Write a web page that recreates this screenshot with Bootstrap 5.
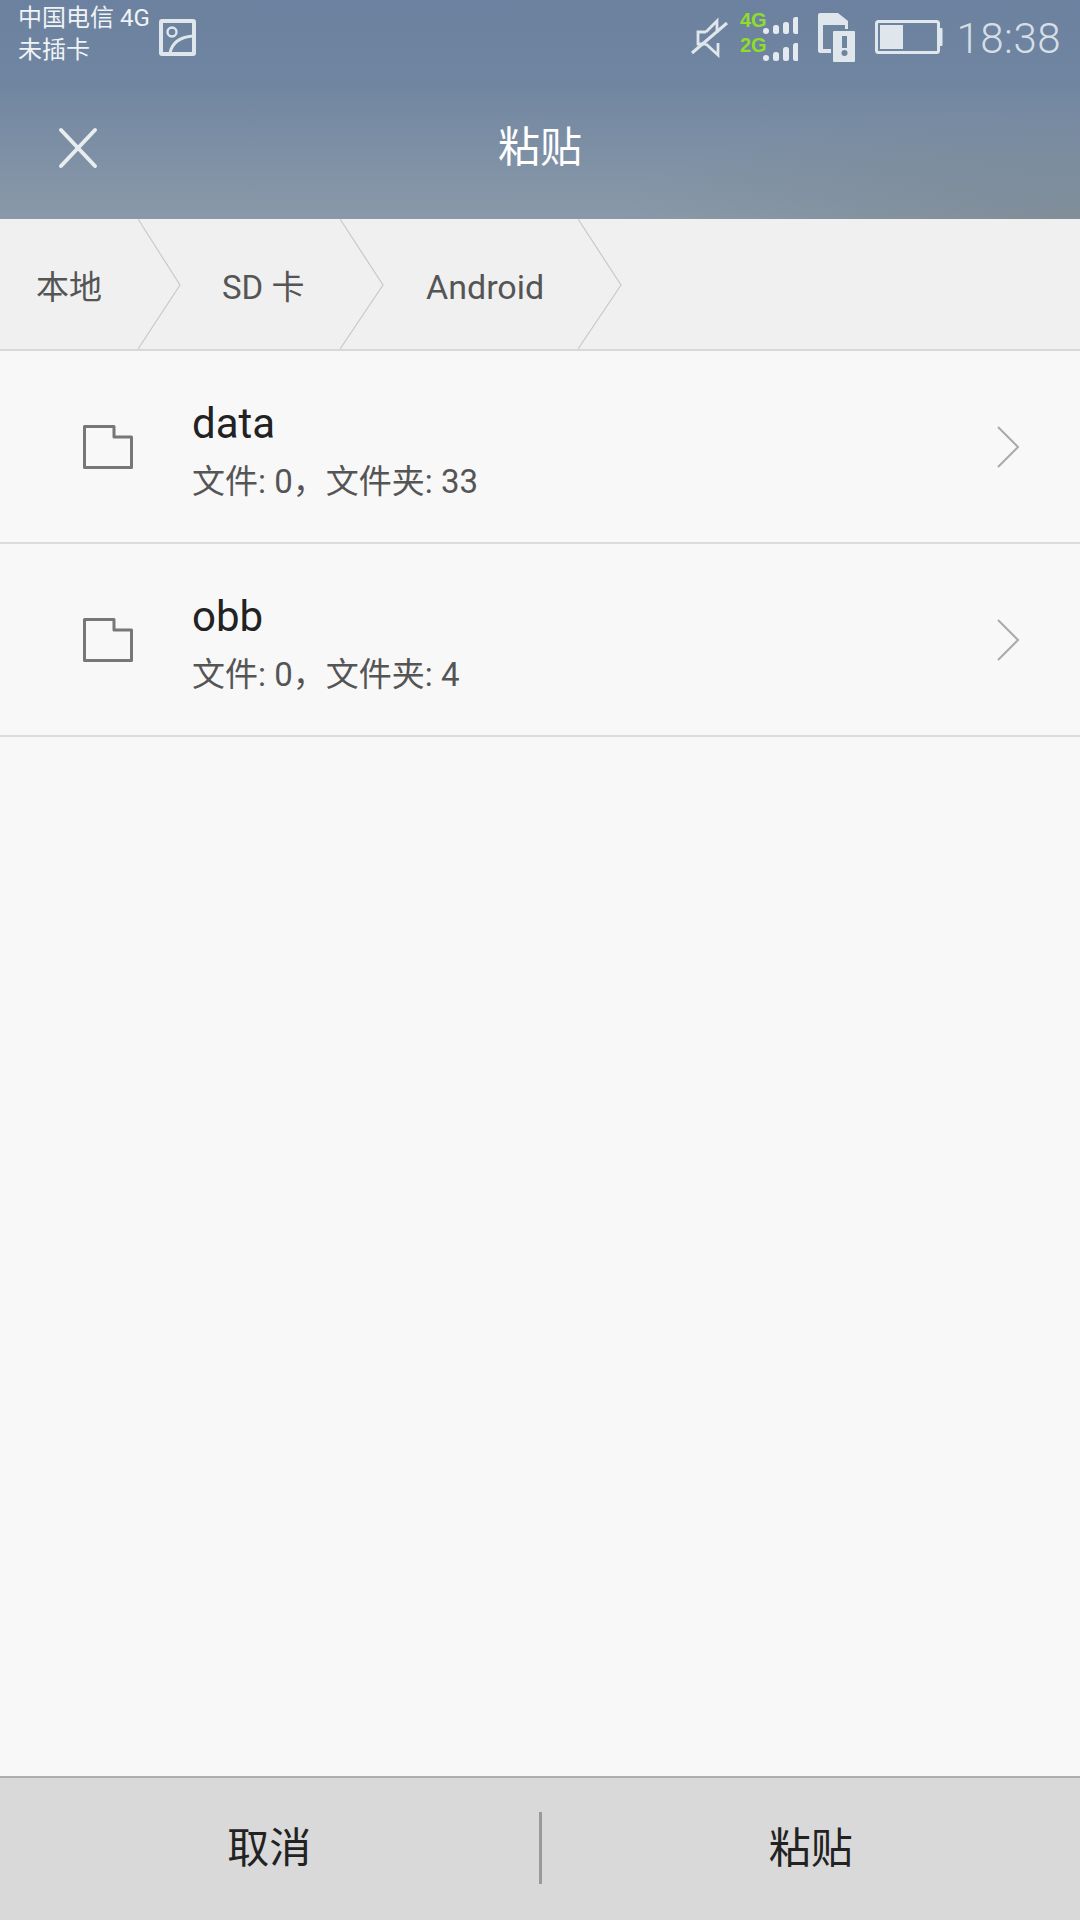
<!DOCTYPE html>
<html lang="zh"><head><meta charset="utf-8"><title>粘贴</title>
<link href="https://cdn.jsdelivr.net/npm/bootstrap@5.3.0/dist/css/bootstrap.min.css" rel="stylesheet">
<style>
html,body{height:1920px;margin:0;background:#f8f8f8;font-family:Roboto,"Noto Sans CJK SC",sans-serif;overflow:hidden}
.shell{height:1920px}
.topzone{height:219px;background:radial-gradient(ellipse 460px 110px at 100% 100%,rgba(105,115,115,.3),rgba(105,115,115,0)),linear-gradient(180deg,#6b819f 0%,#6f85a0 35%,#8a99a9 100%)}
.statusrow{height:74px;padding:0 19px 0 18px}
.carrier{font-size:24px;line-height:32px;color:#f0f3f6;padding-bottom:6px;width:141px;white-space:nowrap}
.muteicon{margin-right:12px}
.sigicon{margin-right:18px}
.simicon{margin-right:18px}
.batticon{margin-right:13px}
.clock{font-size:42px;font-weight:300;color:#d6dee6;line-height:1;letter-spacing:.5px;padding-top:3px}
.titlerow{height:145px}
.titletext{font-size:42px;color:#fff;line-height:1;padding-top:3px}
.closebtn{left:58px;top:50%;margin-top:-20px}
.crumbs{height:132px;background:#f0f0f0;border-bottom:2px solid #d8d8d8}
.crumbitem{height:130px;font-size:33px;color:#555;padding-top:7px}
.crumbone{width:138px;padding-left:36px}
.crumbtwo{width:202px;padding-left:84px}
.crumbthree{width:238px;padding-left:86px;font-size:34px}
.crumbmark{left:100%;top:0}
.filerow{height:193px;border-bottom:2px solid #dcdcdc}
.foldericon{margin-left:83px;margin-right:59px}
.filetext{padding-top:8px}
.filename{font-size:42px;color:#222;line-height:48px}
.fileinfo{font-size:33px;color:#555;line-height:40px;margin-top:14px}
.rowchev{margin-right:60px}
.actionbar{height:144px;background:#d9d9d9;border-top:2px solid #aeaeae}
.actionbtn{font-size:42px;color:#222;line-height:1}
.actionline{width:3px;height:72px;background:#999;margin-bottom:2px}
</style></head><body>
<div class="shell d-flex flex-column">
<div class="topzone flex-shrink-0">
  <div class="statusrow d-flex align-items-center">
    <div class="carrier">中国电信 4G<br>未插卡</div>
    <svg width="37" height="37" viewBox="0 0 37 37" fill="none" stroke="#dfe6ec"><rect x="2" y="2" width="33" height="33" rx="1" stroke-width="4"/><circle cx="13" cy="13" r="4.5" stroke-width="2.4"/><path d="M11 34C13 24 21 18 34 17" stroke-width="3"/></svg>
    <div class="ms-auto d-flex align-items-center">
      <svg class="muteicon" width="38" height="42" viewBox="690 16 38 42" fill="none" stroke="#dfe6ec" stroke-width="2.8"><path d="M706 32H698V44H706"/><path d="M706 32L717 21V33"/><path d="M706 44L718 55V43"/><path d="M692 53L727 23" stroke-width="3"/></svg>
      <svg class="sigicon" width="58" height="58" viewBox="740 8 58 58"><g font-family="Liberation Sans,sans-serif" font-weight="700" font-size="20" fill="#8fdc2c"><text x="740" y="27">4G</text><text x="740" y="52">2G</text></g><g fill="#e4eaef"><rect x="763" y="28" width="6" height="6" rx="3"/><rect x="773" y="25" width="6" height="9" rx="2.5"/><rect x="783" y="22" width="6" height="12" rx="2.5"/><rect x="793" y="17" width="6" height="17" rx="2.5"/><rect x="763" y="55" width="6" height="6" rx="3"/><rect x="773" y="52" width="6" height="9" rx="2.5"/><rect x="783" y="47" width="6" height="14" rx="2.5"/><rect x="793" y="43" width="6" height="18" rx="2.5"/></g></svg>
      <svg class="simicon" width="40" height="50" viewBox="816 12 40 50"><path d="M820 13H838L848 21V53H820A2 2 0 0 1 818 51V15A2 2 0 0 1 820 13Z" fill="#dfe6ec"/><rect x="823" y="25" width="22" height="24" fill="#6e85a0"/><rect x="831" y="29" width="26" height="35" fill="#6e85a0"/><rect x="833" y="31" width="22" height="31" rx="1" fill="#dfe6ec"/><rect x="842" y="36" width="5" height="12" fill="#6e85a0"/><circle cx="844.500" cy="53" r="3" fill="#6e85a0"/></svg>
      <svg class="batticon" width="69" height="36" viewBox="874 20 69 36" fill="none"><rect x="876.500" y="22.500" width="62" height="31" rx="2" stroke="#dfe6ec" stroke-width="3"/><rect x="880" y="26" width="23" height="24" fill="#dfe6ec"/><rect x="939" y="29" width="3.500" height="18" rx="1" fill="#dfe6ec"/></svg>
      <div class="clock">18:38</div>
    </div>
  </div>
  <div class="titlerow position-relative d-flex align-items-center justify-content-center">
    <svg class="closebtn position-absolute" width="40" height="42" viewBox="0 0 40 42" stroke="#e9edf0" stroke-width="4" stroke-linecap="round"><path d="M3 3L37 39M37 3L3 39"/></svg>
    <div class="titletext">粘贴</div>
  </div>
</div>
<div class="crumbs d-flex flex-shrink-0">
  <div class="crumbitem crumbone position-relative d-flex align-items-center">本地<svg class="crumbmark position-absolute" width="44" height="130" viewBox="0 0 44 130" fill="none" stroke="#c9c9c9" stroke-width="1.2"><path d="M0 0L42 66L0 130"/></svg></div>
  <div class="crumbitem crumbtwo position-relative d-flex align-items-center">SD 卡<svg class="crumbmark position-absolute" width="44" height="130" viewBox="0 0 44 130" fill="none" stroke="#c9c9c9" stroke-width="1.2"><path d="M0 0L43 66L0 130"/></svg></div>
  <div class="crumbitem crumbthree position-relative d-flex align-items-center">Android<svg class="crumbmark position-absolute" width="44" height="130" viewBox="0 0 44 130" fill="none" stroke="#c9c9c9" stroke-width="1.2"><path d="M0 0L43 66L0 130"/></svg></div>
</div>
<div class="filerow d-flex align-items-center flex-shrink-0">
  <svg class="foldericon flex-shrink-0" width="50" height="44" viewBox="0 0 50 44" fill="none" stroke="#777" stroke-width="3" stroke-linejoin="round"><path d="M1.500 1.500H31V12H48.500V42.500H1.500Z"/></svg>
  <div class="filetext flex-grow-1"><div class="filename">data</div><div class="fileinfo">文件: 0，文件夹: 33</div></div>
  <svg class="rowchev" width="24" height="42" viewBox="0 0 24 42" fill="none" stroke="#aaa" stroke-width="2"><path d="M2 1L22 21L2 41"/></svg>
</div>
<div class="filerow d-flex align-items-center flex-shrink-0">
  <svg class="foldericon flex-shrink-0" width="50" height="44" viewBox="0 0 50 44" fill="none" stroke="#777" stroke-width="3" stroke-linejoin="round"><path d="M1.500 1.500H31V12H48.500V42.500H1.500Z"/></svg>
  <div class="filetext flex-grow-1"><div class="filename">obb</div><div class="fileinfo">文件: 0，文件夹: 4</div></div>
  <svg class="rowchev" width="24" height="42" viewBox="0 0 24 42" fill="none" stroke="#aaa" stroke-width="2"><path d="M2 1L22 21L2 41"/></svg>
</div>
<div class="flex-grow-1"></div>
<div class="actionbar d-flex align-items-center flex-shrink-0">
  <div class="actionbtn flex-fill text-center w-50">取消</div>
  <div class="actionline flex-shrink-0"></div>
  <div class="actionbtn flex-fill text-center w-50">粘贴</div>
</div>
</div>
<script src="https://cdn.jsdelivr.net/npm/bootstrap@5.3.0/dist/js/bootstrap.bundle.min.js"></script>
</body></html>
